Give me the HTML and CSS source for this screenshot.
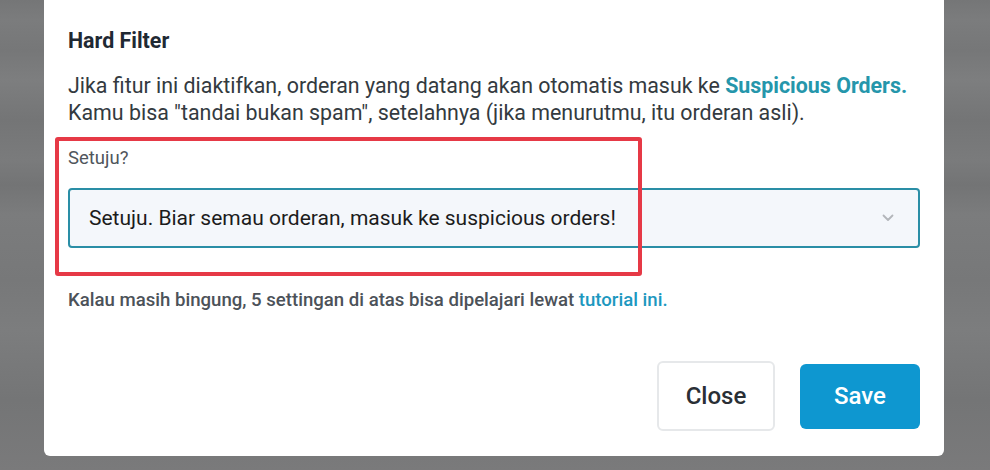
FILE: index.html
```html
<!DOCTYPE html>
<html lang="id">
<head>
<meta charset="utf-8">
<title>Hard Filter</title>
<link rel="stylesheet" href="styles.css">
</head>
<body>
<div class="backdrop">
  <div class="modal">
    <h2 class="title">Hard Filter</h2>
    <p class="desc">Jika fitur ini diaktifkan, orderan yang datang akan otomatis masuk ke <a class="link-strong" href="#">Suspicious Orders.</a><br>Kamu bisa "tandai bukan spam", setelahnya (jika menurutmu, itu orderan asli).</p>
    <div class="field">
      <label class="label">Setuju?</label>
      <div class="select">
        <span class="select-text">Setuju. Biar semau orderan, masuk ke suspicious orders!</span>
        <svg class="chevron" width="12" height="8" viewBox="0 0 12 8"><path d="M1.5 1.5 L6 6 L10.5 1.5" fill="none" stroke="#b3b6ba" stroke-width="1.8" stroke-linecap="round" stroke-linejoin="round"/></svg>
      </div>
      <div class="highlight"></div>
    </div>
    <p class="help">Kalau masih bingung, 5 settingan di atas bisa dipelajari lewat <a class="link" href="#">tutorial ini.</a></p>
    <div class="footer">
      <button class="btn btn-close">Close</button>
      <button class="btn btn-save">Save</button>
    </div>
  </div>
</div>
</body>
</html>
```
FILE: styles.css
```css
* { box-sizing: border-box; }
html, body { margin: 0; padding: 0; }
body {
  width: 990px;
  height: 470px;
  overflow: hidden;
  font-family: Roboto, "Liberation Sans", sans-serif;
}
.backdrop {
  width: 990px;
  height: 470px;
  background:
    linear-gradient(180deg,
      #757677 0px, #7b7c7d 20px, #767778 50px, #7d7e7f 80px, #747576 120px,
      #7a7b7c 160px, #737475 185px, #7b7c7d 215px, #777879 280px, #7c7d7e 330px,
      #747576 400px, #7a7a7b 470px);
  padding-left: 44px;
}
.modal {
  width: 900px;
  background: #fff;
  border-radius: 0 0 6px 6px;
  padding: 29px 24px 25px 24px;
}
.title {
  margin: 0;
  font-size: 21.4px;
  line-height: 24px;
  font-weight: 700;
  color: #1f2933;
}
.desc {
  margin: 19px 0 0 0;
  font-size: 21.4px;
  line-height: 27px;
  color: #333a40;
}
.link-strong {
  color: #2596ab;
  font-weight: 700;
  text-decoration: none;
}
.field {
  position: relative;
  margin-top: 22px;
}
.label {
  display: block;
  font-size: 18.5px;
  line-height: 20px;
  color: #50565c;
}
.select {
  margin-top: 20px;
  height: 60px;
  border: 2px solid #2a8ea6;
  border-radius: 4px;
  background: #f4f7fb;
  display: flex;
  align-items: center;
  justify-content: space-between;
  padding: 0 24px 0 19px;
}
.select-text {
  font-size: 21px;
  color: #1c1c1c;
}
.chevron { display: block; }
.highlight {
  position: absolute;
  left: -13px;
  top: -11px;
  width: 587px;
  height: 139px;
  border: 4px solid #e63946;
  border-radius: 3px;
  pointer-events: none;
}
.help {
  margin: 42px 0 0 0;
  font-size: 18.6px;
  line-height: 20px;
  font-weight: 500;
  color: #4c5259;
}
.link {
  color: #1d98bf;
  text-decoration: none;
  font-weight: 500;
}
.footer {
  display: flex;
  justify-content: flex-end;
  align-items: center;
  gap: 25px;
  margin-top: 51px;
}
.btn {
  font-family: Roboto, "Liberation Sans", sans-serif;
  font-size: 24px;
  font-weight: 500;
  border-radius: 6px;
  cursor: pointer;
}
.btn-close {
  width: 118px;
  height: 70px;
  background: #fff;
  border: 2px solid #e6e8ea;
  color: #2a2f35;
}
.btn-save {
  width: 120px;
  height: 65px;
  background: #0e97d0;
  border: none;
  color: #fff;
}
```
